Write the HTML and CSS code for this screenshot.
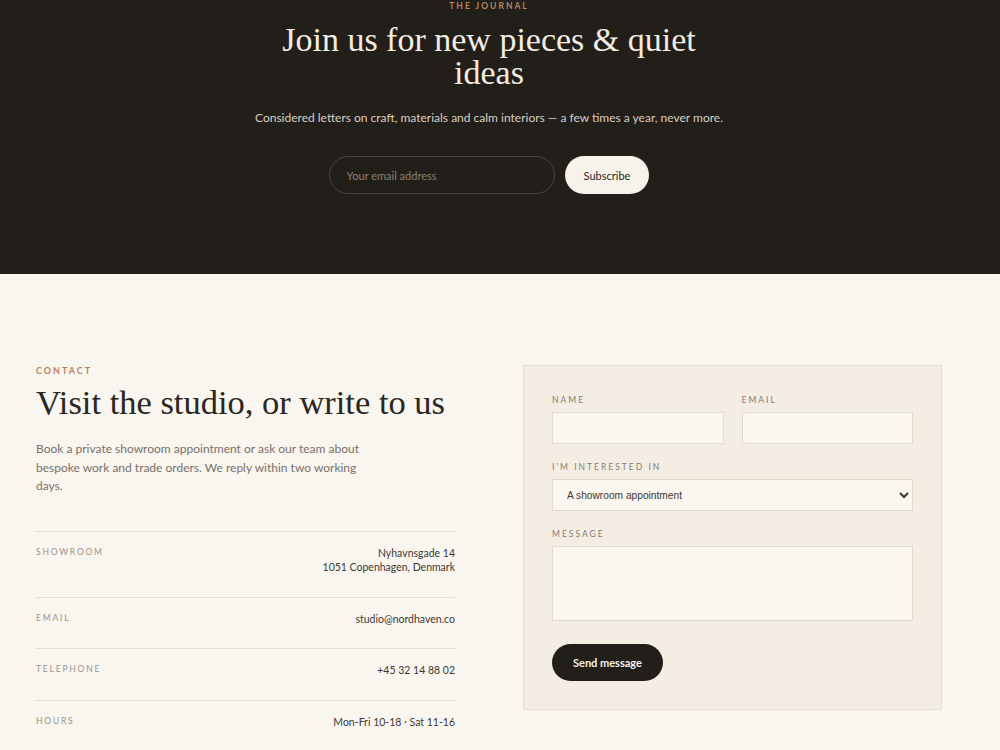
FILE: index.html
```html
<!DOCTYPE html>
<html lang="en">

<head>
    <meta charset="UTF-8">
    <meta name="viewport" content="width=device-width, initial-scale=1.0">
    <title>Nordhaven - Journal &amp; Contact</title>
    <link rel="stylesheet" href="styles.css">
</head>

<body>
    <!-- newsletter band -->
    <section class="journal">
        <div class="wrap">
            <p class="eyebrow">The Journal</p>
            <h2 class="journal-title">Join us for new pieces &amp; quiet ideas</h2>
            <p class="journal-text">Considered letters on craft, materials and calm interiors — a few times a year, never more.</p>
            <form class="subscribe-form">
                <input type="email" class="subscribe-input" placeholder="Your email address">
                <button type="button" class="subscribe-button">Subscribe</button>
            </form>
        </div>
    </section>

    <!-- contact -->
    <section class="contact">
        <div class="wrap contact-grid">
            <div class="contact-info">
                <p class="eyebrow">Contact</p>
                <h2 class="contact-title">Visit the studio, or write to us</h2>
                <p class="contact-text">Book a private showroom appointment or ask our team about bespoke work and trade orders. We reply within two working days.</p>

                <dl class="details">
                    <div class="detail-row">
                        <dt>Showroom</dt>
                        <dd>Nyhavnsgade 14<br>1051 Copenhagen, Denmark</dd>
                    </div>
                    <div class="detail-row">
                        <dt>Email</dt>
                        <dd>studio@nordhaven.co</dd>
                    </div>
                    <div class="detail-row">
                        <dt>Telephone</dt>
                        <dd>+45 32 14 88 02</dd>
                    </div>
                    <div class="detail-row">
                        <dt>Hours</dt>
                        <dd>Mon-Fri 10-18 · Sat 11-16</dd>
                    </div>
                </dl>
            </div>

            <form class="contact-form">
                <div class="field-pair">
                    <div class="field">
                        <label for="name">Name</label>
                        <input type="text" id="name">
                    </div>
                    <div class="field">
                        <label for="email">Email</label>
                        <input type="email" id="email">
                    </div>
                </div>
                <div class="field">
                    <label for="topic">I'm interested in</label>
                    <select id="topic">
                        <option>A showroom appointment</option>
                        <option>Bespoke work</option>
                        <option>Trade orders</option>
                    </select>
                </div>
                <div class="field">
                    <label for="message">Message</label>
                    <textarea id="message"></textarea>
                </div>
                <button type="button" class="send-button">Send message</button>
            </form>
        </div>
    </section>
</body>

</html>
```

FILE: styles.css
```css
body {
    font-family: 'Lato', 'Liberation Sans', sans-serif;
    margin: 0;
    padding: 0;
    background-color: #f9f6f0;
    color: #2a2621;
}

.wrap {
    width: 906px;
    margin-left: 36px;
}

.eyebrow {
    margin: 0;
    font-size: 9px;
    line-height: 12px;
    font-weight: 700;
    letter-spacing: 2px;
    text-transform: uppercase;
    color: #b9815d;
}

/* newsletter band */
.journal {
    background-color: #221e19;
    padding: 0 0 80px;
    text-align: center;
}

.journal .eyebrow {
    color: #b8875f;
    font-size: 8.5px;
    letter-spacing: 2px;
}

.journal-title {
    max-width: 440px;
    margin: 11px auto 0;
    font-family: 'Liberation Serif', serif;
    font-weight: 400;
    font-size: 34px;
    line-height: 33px;
    color: #f3ece2;
}

.journal-text {
    margin: 20px 0 0;
    font-size: 12px;
    line-height: 18px;
    color: #d8cfc3;
}

.subscribe-form {
    display: flex;
    justify-content: center;
    gap: 10px;
    margin-top: 29px;
}

.subscribe-input {
    width: 226px;
    height: 38px;
    box-sizing: border-box;
    padding: 0 17px;
    border: 1px solid #4a443c;
    border-radius: 19px;
    background: transparent;
    color: #f3ece2;
    font-family: inherit;
    font-size: 11px;
}

.subscribe-input::placeholder {
    color: #8a8176;
}

.subscribe-button {
    height: 38px;
    padding: 0 19px;
    border: none;
    border-radius: 19px;
    background-color: #f7f2ea;
    color: #2a2520;
    font-family: 'Lato', sans-serif;
    font-size: 11px;
    cursor: pointer;
}

/* contact */
.contact {
    padding: 91px 0 60px;
}

.contact-grid {
    display: grid;
    grid-template-columns: minmax(0, 1fr) minmax(0, 1fr);
    gap: 68px;
    align-items: start;
}

.contact-title {
    margin: 5px 0 0;
    font-family: 'Liberation Serif', serif;
    font-weight: 400;
    font-size: 34.5px;
    line-height: 40px;
    color: #2a2621;
}

.contact-text {
    max-width: 330px;
    margin: 18px 0 0;
    font-size: 12px;
    line-height: 18.5px;
    color: #7a7067;
}

.details {
    margin: 35px 0 0;
}

.detail-row {
    display: flex;
    justify-content: space-between;
    padding: 14px 0 22px;
    border-top: 1px solid #e5ddd1;
}

.detail-row dt {
    font-size: 8.5px;
    line-height: 12px;
    letter-spacing: 1.8px;
    text-transform: uppercase;
    color: #9b9288;
}

.detail-row dd {
    margin: 0;
    text-align: right;
    font-size: 10.5px;
    line-height: 14.5px;
    color: #3e3832;
}

.contact-form {
    background-color: #f4ede4;
    border: 1px solid #e6dccf;
    padding: 28px;
}

.field-pair {
    display: grid;
    grid-template-columns: minmax(0, 1fr) minmax(0, 1fr);
    gap: 18px;
}

.field {
    display: flex;
    flex-direction: column;
    margin-bottom: 17px;
}

.field label {
    margin-bottom: 6px;
    font-size: 8.5px;
    line-height: 12px;
    letter-spacing: 2px;
    text-transform: uppercase;
    color: #857c72;
}

.field input,
.field select,
.field textarea {
    box-sizing: border-box;
    width: 100%;
    height: 32px;
    border: 1px solid #e3d9cc;
    background-color: #faf7f1;
    color: #3e3832;
}

.field select {
    padding: 0 10px;
    font-family: 'Liberation Sans', sans-serif;
    font-size: 10.2px;
}

.field textarea {
    height: 75px;
    resize: none;
}

.send-button {
    margin-top: 6px;
    height: 37px;
    padding: 0 21px;
    border: none;
    border-radius: 19px;
    background-color: #221e19;
    color: #f7f2ea;
    font-family: 'Lato', sans-serif;
    font-weight: 700;
    font-size: 11px;
    cursor: pointer;
}
```
